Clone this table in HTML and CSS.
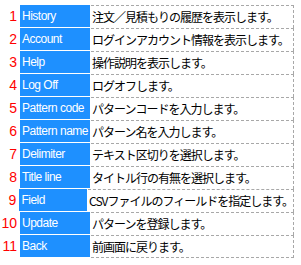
FILE: index.html
```html
<!DOCTYPE html>
<html lang="ja">
<head>
    <meta charset="UTF-8">
    <title>画面項目の説明</title>
    <link rel="stylesheet" href="styles.css">
</head>
<body>
    <div class="help-list">
        <div class="help-row">
            <span class="num">1</span>
            <span class="label">History</span>
            <span class="desc">注文／見積もりの履歴を表示します。</span>
        </div>
        <div class="help-row">
            <span class="num">2</span>
            <span class="label">Account</span>
            <span class="desc">ログインアカウント情報を表示します。</span>
        </div>
        <div class="help-row">
            <span class="num">3</span>
            <span class="label">Help</span>
            <span class="desc">操作説明を表示します。</span>
        </div>
        <div class="help-row">
            <span class="num">4</span>
            <span class="label">Log Off</span>
            <span class="desc">ログオフします。</span>
        </div>
        <div class="help-row">
            <span class="num">5</span>
            <span class="label">Pattern code</span>
            <span class="desc">パターンコードを入力します。</span>
        </div>
        <div class="help-row">
            <span class="num">6</span>
            <span class="label">Pattern name</span>
            <span class="desc">パターン名を入力します。</span>
        </div>
        <div class="help-row">
            <span class="num">7</span>
            <span class="label">Delimiter</span>
            <span class="desc">テキスト区切りを選択します。</span>
        </div>
        <div class="help-row">
            <span class="num">8</span>
            <span class="label">Title line</span>
            <span class="desc">タイトル行の有無を選択します。</span>
        </div>
        <div class="help-row">
            <span class="num">9</span>
            <span class="label">Field</span>
            <span class="desc">CSVファイルのフィールドを指定します。</span>
        </div>
        <div class="help-row">
            <span class="num">10</span>
            <span class="label">Update</span>
            <span class="desc">パターンを登録します。</span>
        </div>
        <div class="help-row">
            <span class="num">11</span>
            <span class="label">Back</span>
            <span class="desc">前画面に戻ります。</span>
        </div>
    </div>
</body>
</html>
```

FILE: styles.css
```css
:root {
    --label-bg: #1e90ff;
    --num-color: #ff0000;
    --rule-color: #a8a8a8;
    --row-height: 22px;
}

body {
    margin: 0;
    padding: 5px 0 0 0;
    background: #fff;
    color: #000;
    font-family: "Liberation Sans", "Noto Sans CJK JP", sans-serif;
    font-size: 12px;
}

.help-list {
    display: flex;
    flex-direction: column;
    width: 294px;
}

.help-row {
    display: flex;
    height: 23px;
}

.num {
    width: 17px;
    padding-right: 3px;
    text-align: right;
    color: var(--num-color);
    font-size: 14px;
    line-height: 23px;
}

.label {
    width: 68px;
    height: var(--row-height);
    padding-left: 2px;
    background: var(--label-bg);
    color: #fff;
    letter-spacing: -0.5px;
    line-height: 23px;
    white-space: nowrap;
    overflow: hidden;
}

.desc {
    flex: 1;
    margin-left: 1px;
    padding-left: 1px;
    border-top: 1px dashed var(--rule-color);
    border-right: 1px dashed var(--rule-color);
    font-family: "Noto Sans CJK JP", sans-serif;
    letter-spacing: -1px;
    line-height: var(--row-height);
    white-space: nowrap;
}

.help-row:last-child .desc {
    border-bottom: 1px dashed var(--rule-color);
}
```
